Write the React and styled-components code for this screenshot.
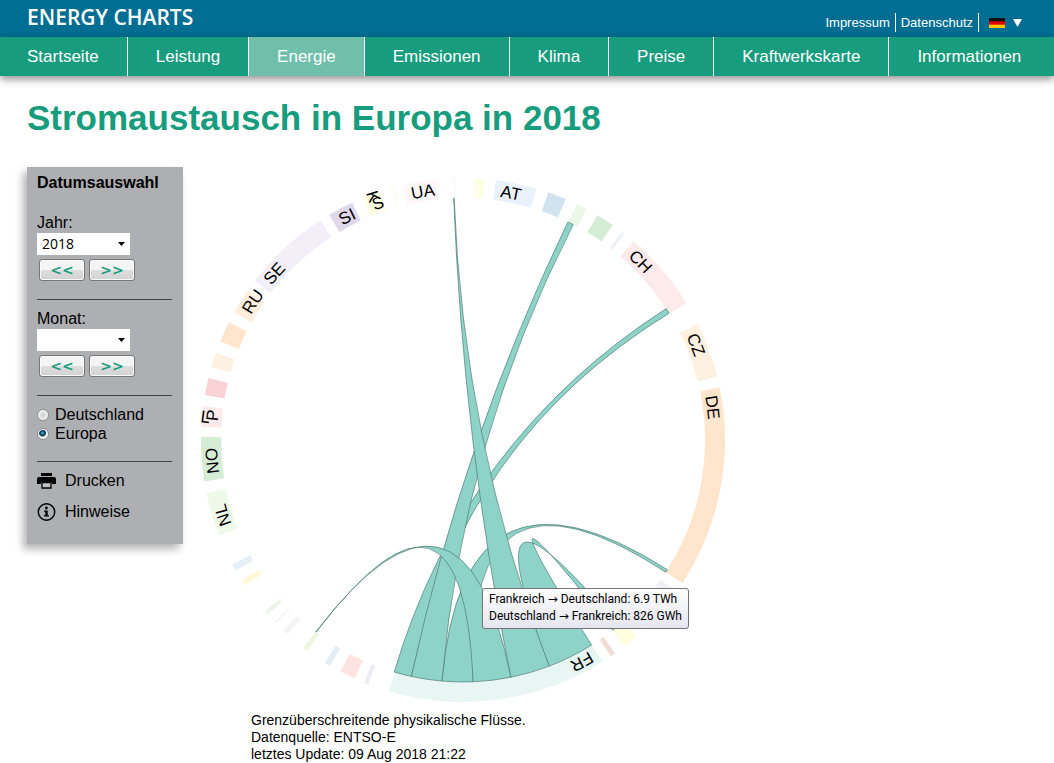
import React, { useState } from "react";
import styled, { createGlobalStyle } from "styled-components";

const GREEN = "#179c7d";
const BLUE = "#006e92";
const SANS = `"Liberation Sans", Arial, sans-serif`;
const HUMANIST = `"Open Sans", "Noto Sans", sans-serif`;

const GlobalStyle = createGlobalStyle`
  *, *::before, *::after { box-sizing: border-box; }
  body {
    margin: 0;
    background: #fff;
    color: #000;
    font: 16px/20px ${SANS};
  }
`;

const TopBar = styled.header`
  display: flex;
  justify-content: space-between;
  align-items: center;
  height: 37px;
  padding: 0 32px 0 27px;
  background: ${BLUE};
  color: #fff;
`;

const Brand = styled.a`
  padding-bottom: 4px;
  color: inherit;
  font: 600 21px/28px ${HUMANIST};
  text-decoration: none;
`;

const MetaNav = styled.nav`
  display: flex;
  align-items: center;
  padding-top: 8px;
  font-size: 13px;
  line-height: 19px;
`;

const MetaLink = styled.a`
  padding: 0 5px;
  border-right: 1px solid #fff;
  color: inherit;
  text-decoration: none;
`;

const LanguageButton = styled.button`
  display: flex;
  align-items: center;
  gap: 8px;
  margin-left: 10px;
  padding: 0;
  border: 0;
  background: none;
`;

const MainNav = styled.nav`
  display: flex;
  height: 39px;
  background: ${GREEN};
  box-shadow: 0 3px 8px rgba(0, 0, 0, 0.45);
`;

const NavLink = styled.a`
  display: flex;
  align-items: center;
  padding: 0 28px;
  border-right: 1px solid #fff;
  background: ${(p) => (p.$active ? "#70bfaa" : "transparent")};
  color: #fff;
  font-size: 17px;
  text-decoration: none;
  white-space: nowrap;

  &:first-child { padding-left: 27px; }
  &:last-child { border-right: 0; }
`;

const Title = styled.h1`
  margin: 22px 27px 29px;
  color: ${GREEN};
  font-size: 35px;
  line-height: 40px;
`;

const Main = styled.main`
  display: flex;
  align-items: flex-start;
  gap: 10px;
  padding-left: 27px;
`;

const Sidebar = styled.aside`
  flex: none;
  width: 156px;
  padding: 6px 11px 22px 10px;
  background: #aeafb2;
  box-shadow: -4px 5px 8px rgba(0, 0, 0, 0.3);
`;

const SidebarTitle = styled.h2`
  margin: 0 0 20px;
  font-size: 16px;
  line-height: 20px;
`;

const FieldLabel = styled.label`
  display: block;
`;

const SelectBox = styled.div`
  display: grid;
  align-items: center;
  width: 93px;
  height: 22px;

  > * { grid-area: 1 / 1; }
  > svg { justify-self: end; margin-right: 5px; pointer-events: none; }
`;

const Select = styled.select`
  appearance: none;
  width: 100%;
  height: 22px;
  padding: 0 18px 0 5px;
  border: 0;
  border-radius: 0;
  background: #fff;
  color: #000;
  font: 14px/20px ${HUMANIST};
`;

const StepRow = styled.div`
  display: flex;
  gap: 4px;
  padding: 4px 0 0 2px;
`;

const StepButton = styled.button`
  width: 46px;
  height: 22px;
  padding: 0;
  border: 1px solid #777;
  border-radius: 3px;
  background: linear-gradient(#f4f4f4 0 50%, #dedede 50%, #d2d2d2);
  box-shadow: inset 0 0 0 1px #fafafa;
  color: ${GREEN};
  font: bold 14px/18px "DejaVu Sans", sans-serif;
`;

const Divider = styled.hr`
  height: 1px;
  margin: 18px 0 9px;
  border: 0;
  background: #444;
`;

const RadioLabel = styled.label`
  display: flex;
  align-items: center;
  gap: 6px;
  line-height: 19px;
`;

const Radio = styled.input`
  appearance: none;
  width: 12px;
  height: 12px;
  margin: 0;
  border: 1px solid #8e8f8f;
  border-radius: 50%;
  background: radial-gradient(circle, #ccc, #eee 60%);
  box-shadow: inset 0 0 0 1px #f6f6f6;

  &:checked {
    background: radial-gradient(circle at 45% 40%, #59b8dc 0, #0b4f77 2px, #0b3a56 3px, #f2f2f2 4px);
  }
`;

const ActionList = styled.div`
  display: flex;
  flex-direction: column;
  gap: 11px;
`;

const ActionLink = styled.a`
  display: flex;
  align-items: center;
  gap: 9px;
  color: inherit;
  text-decoration: none;
`;

const ChartArea = styled.section`
  position: relative;
  flex: 1;
  min-width: 0;
`;

const ChordSvg = styled.svg`
  display: block;
  width: 540px;
  height: 540px;

  text {
    font-family: ${SANS};
    font-size: 17px;
  }
`;

const Tooltip = styled.div`
  position: absolute;
  left: 289px;
  top: 421px;
  padding: 2px 6px 3px;
  border: 1px solid #767676;
  border-radius: 3px;
  background: linear-gradient(#fff, #e4e5f0);
  font: 12px/17px Roboto, "DejaVu Sans", sans-serif;
  white-space: nowrap;
`;

const Caption = styled.p`
  margin: 5px 0 0 58px;
  font-size: 14px;
  line-height: 17px;
`;

const OUTER = 262;
const INNER = 242;
const BASELINE = 246;

const point = (deg, r) => {
  const a = (deg * Math.PI) / 180;
  return `${(Math.sin(a) * r).toFixed(2)},${(-Math.cos(a) * r).toFixed(2)}`;
};

const band = (a, b) =>
  `M${point(a, OUTER)}A${OUTER},${OUTER} 0 0 1 ${point(b, OUTER)}` +
  `L${point(b, INNER)}A${INNER},${INNER} 0 0 0 ${point(a, INNER)}Z`;

const ribbon = ([s0, s1, t0, t1]) =>
  `M${point(s0, INNER)}A${INNER},${INNER} 0 0 1 ${point(s1, INNER)}` +
  `Q0,0 ${point(t0, INNER)}A${INNER},${INNER} 0 0 1 ${point(t1, INNER)}` +
  `Q0,0 ${point(s0, INNER)}Z`;

const SEGMENTS = [
  [2.6, 4.8, "#ffffe8"],
  [7.2, 16.3, "#e9f2fa", "AT"],
  [19, 23.1, "#d2e3f0"],
  [25.8, 28.2, "#ecf8e7"],
  [30.9, 34.9, "#d5edd5"],
  [37.4, 38.1, "#efeff6"],
  [40.6, 58.5, "#fdeaea", "CH"],
  [63.7, 76, "#fff0e0", "CZ"],
  [78.4, 123.1, "#ffe5cc", "DE"],
  [125.3, 128.3, "#f2eff7"],
  [135, 136.4, "#edf3ee"],
  [138.6, 141.9, "#ffffe0"],
  [144.5, 145.6, "#f0ddd5"],
  [147.8, 196.4, "#e8f6f4", "FR"],
  [201.2, 202.2, "#efecf7"],
  [204.4, 207.9, "#fde4e1"],
  [210.5, 211.8, "#e3edf6"],
  [216.5, 217.5, "#edf6dc"],
  [222.1, 223.4, "#f5f5f5"],
  [225.7, 226, "#f3f3f3"],
  [228.2, 229.1, "#edf6e9"],
  [236.3, 237.6, "#fff8d8"],
  [240.1, 241.6, "#e7eff6"],
  [248.7, 258.3, "#eff9e9", "NL"],
  [260.9, 270.7, "#d5ecd5", "NO"],
  [272.9, 277.4, "#fdeaea", "P"],
  [279.9, 283.7, "#f8d2d5"],
  [286.2, 289.4, "#fff0e0"],
  [292.1, 296.7, "#ffe5cc"],
  [299.1, 304.8, "#ffeedd", "RU"],
  [307.4, 327, "#f3eff8", "SE"],
  [329.3, 335, "#e0d8eb", "SI"],
  [337.5, 341.6, "#ffffe5", "S"],
  [344.3, 344.6, "#fbfbe4"],
  [346.7, 354.3, "#fdf6fb", "UA"],
  [358, 358.2, "#f0f3f2"],
];

const RIBBONS = [
  [177.6, 185, 122.4, 123.1],
  [192.3, 196.5, 57.1, 58.4],
  [185, 192.3, 25.7, 27.1],
  [159.1, 168.6, 357.8, 357.9],
  [168.6, 177.6, 217.4, 217.5],
  [147.9, 159.1, 140.2, 141.8],
];

function ChordDiagram() {
  return (
    <ChordSvg viewBox="-270 -273 540 540" role="img" aria-label="Stromaustausch in Europa">
      {SEGMENTS.map(([a, b, fill]) => (
        <path key={a} d={band(a, b)} fill={fill} />
      ))}
      {RIBBONS.map((r) => (
        <path key={r[0]} d={ribbon(r)} fill="#8dd3c7" stroke="#4f7d76" strokeWidth="0.7" />
      ))}
      {SEGMENTS.filter((s) => s[3]).map(([a, , , name]) => (
        <React.Fragment key={name}>
          <path
            id={`label-${name}`}
            fill="none"
            d={`M${point(a + 1.4, BASELINE)}A${BASELINE},${BASELINE} 0 0 1 ${point(a + 21.4, BASELINE)}`}
          />
          <text>
            <textPath href={`#label-${name}`}>{name}</textPath>
          </text>
        </React.Fragment>
      ))}
      <text transform="translate(-97 -247) rotate(71.6)">K</text>
      <text transform="translate(-263 -18) rotate(7.4)">L</text>
    </ChordSvg>
  );
}

function Caret() {
  return (
    <svg width="7" height="4" viewBox="0 0 7 4" aria-hidden="true">
      <path d="M0 0h7L3.5 4z" />
    </svg>
  );
}

function Flag() {
  return (
    <svg width="16" height="10" viewBox="0 0 16 10" aria-hidden="true">
      <rect width="16" height="4" fill="#111" />
      <rect y="3.3" width="16" height="3.7" fill="#d00" />
      <rect y="6.7" width="16" height="3.3" fill="#ffc800" />
    </svg>
  );
}

function PrinterIcon() {
  return (
    <svg width="19" height="18" viewBox="0 0 19 18" aria-hidden="true">
      <path d="M4 1h11v3H4z" />
      <path d="M2 5h15q2 0 2 2v5h-4v-2H4v2H0V7q0-2 2-2z" />
      <path d="M5 10.500h9V16H5z" fill="#bfc0c2" stroke="#000" strokeWidth="1.300" />
    </svg>
  );
}

function InfoIcon() {
  return (
    <svg width="19" height="19" viewBox="0 0 19 19" aria-hidden="true">
      <circle cx="9.500" cy="9" r="8.200" fill="none" stroke="#000" strokeWidth="1.500" />
      <circle cx="9.400" cy="5" r="1.400" />
      <path d="M7 7.500h3.700v4.800H12v1.200H7v-1.200h1.300V8.700H7z" />
    </svg>
  );
}

function PeriodField({ id, label, options, value, onChange }) {
  const step = (delta) => {
    const next = options[options.indexOf(value) + delta];
    if (next !== undefined) onChange(next);
  };
  return (
    <div>
      <FieldLabel htmlFor={id}>{label}</FieldLabel>
      <SelectBox>
        <Select id={id} value={value} onChange={(e) => onChange(e.target.value)}>
          {options.map((o) => (
            <option key={o} value={o}>{o}</option>
          ))}
        </Select>
        <Caret />
      </SelectBox>
      <StepRow>
        <StepButton type="button" onClick={() => step(-1)}>&lt;&lt;</StepButton>
        <StepButton type="button" onClick={() => step(1)}>&gt;&gt;</StepButton>
      </StepRow>
    </div>
  );
}

const NAV = ["Startseite", "Leistung", "Energie", "Emissionen", "Klima", "Preise", "Kraftwerkskarte", "Informationen"];
const YEARS = ["2015", "2016", "2017", "2018"];
const MONTHS = ["", "01", "02", "03", "04", "05", "06", "07", "08", "09", "10", "11", "12"];

export default function App() {
  const [year, setYear] = useState("2018");
  const [month, setMonth] = useState("");
  const [region, setRegion] = useState("Europa");

  return (
    <>
      <GlobalStyle />
      <TopBar>
        <Brand href="#">ENERGY CHARTS</Brand>
        <MetaNav>
          <MetaLink href="#">Impressum</MetaLink>
          <MetaLink href="#">Datenschutz</MetaLink>
          <LanguageButton type="button" aria-label="Sprache">
            <Flag />
            <svg width="9" height="8" viewBox="0 0 9 8" aria-hidden="true">
              <path d="M0 0h9L4.500 8z" fill="#fff" />
            </svg>
          </LanguageButton>
        </MetaNav>
      </TopBar>
      <MainNav>
        {NAV.map((name) => (
          <NavLink key={name} href="#" $active={name === "Energie"}>{name}</NavLink>
        ))}
      </MainNav>
      <Title>Stromaustausch in Europa in 2018</Title>
      <Main>
        <Sidebar>
          <SidebarTitle>Datumsauswahl</SidebarTitle>
          <PeriodField id="jahr" label="Jahr:" options={YEARS} value={year} onChange={setYear} />
          <Divider />
          <PeriodField id="monat" label="Monat:" options={MONTHS} value={month} onChange={setMonth} />
          <Divider />
          {["Deutschland", "Europa"].map((name) => (
            <RadioLabel key={name}>
              <Radio type="radio" name="region" checked={region === name} onChange={() => setRegion(name)} />
              {name}
            </RadioLabel>
          ))}
          <Divider />
          <ActionList>
            <ActionLink href="#"><PrinterIcon />Drucken</ActionLink>
            <ActionLink href="#"><InfoIcon />Hinweise</ActionLink>
          </ActionList>
        </Sidebar>
        <ChartArea>
          <ChordDiagram />
          <Tooltip role="tooltip">
            Frankreich → Deutschland: 6.9 TWh
            <br />
            Deutschland → Frankreich: 826 GWh
          </Tooltip>
          <Caption>
            Grenzüberschreitende physikalische Flüsse.
            <br />
            Datenquelle: ENTSO-E
            <br />
            letztes Update: 09 Aug 2018 21:22
          </Caption>
        </ChartArea>
      </Main>
    </>
  );
}
